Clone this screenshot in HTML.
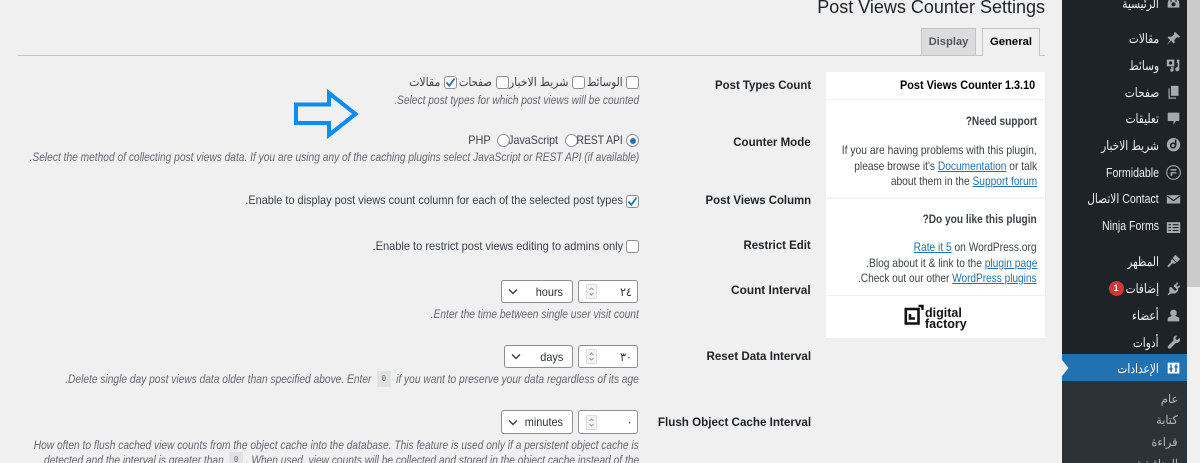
<!DOCTYPE html>
<html><head><meta charset="utf-8">
<style>
html{margin:0;padding:0;width:1200px;height:463px;overflow:hidden}
body{margin:0;padding:0;width:1200px;height:463px;overflow:hidden;position:relative;background:#f0f0f1;font-family:"Liberation Sans","Noto Sans CJK SC",sans-serif;font-size:12px;color:#3c434a}
.t{position:absolute;white-space:nowrap;line-height:16px;transform:scaleX(var(--s,.91));transform-origin:right center}
.r{text-align:right}
.b{font-weight:bold;color:#1d2327;--s:.95}
.d{color:#646970;font-style:italic;font-size:12px;--s:.85}
.p{--s:.85}
.h{--s:.88;font-weight:bold;font-size:11.500px;color:#3c434a}
a{color:#2271b1;text-decoration:underline}
.box{position:absolute;background:#fff;border:1px solid #8c8f94;border-radius:3px;box-sizing:border-box;width:13px;height:13px}
.box svg{position:absolute;left:-1px;top:-1px}
.rad{position:absolute;width:13px;height:13px;border:1px solid #8c8f94;border-radius:50%;background:#fff;box-sizing:border-box}
.ctl{position:absolute;background:#fff;border:1px solid #8c8f94;border-radius:3px;box-sizing:border-box;color:#2c3338}
.m{position:absolute;left:0;width:125px;height:26px}
.m .l{position:absolute;right:28px;top:4px;color:#f0f0f1;font-size:13px;line-height:18px;white-space:nowrap;transform:scaleX(.815);transform-origin:right center}
.m svg{position:absolute;right:6.500px;top:4px;width:15px;height:17px}
.code{display:inline-block;background:#e0e1e2;font-family:"Liberation Mono",monospace;font-size:9px;line-height:16px;height:16px;padding:0 5.500px;font-style:normal;margin:0 3px;vertical-align:top}
</style></head><body>

<div class="t" style="right:155px;top:-5px;font-size:18px;line-height:24px;color:#1d2327;--s:1;text-align:right">Post Views Counter Settings</div>

<div style="position:absolute;left:18px;top:55px;width:1027px;height:1px;background:#c3c4c7"></div>
<div style="position:absolute;left:921px;top:28px;width:55px;height:28px;background:#dcdcde;border:1px solid #c3c4c7;box-sizing:border-box;color:#50575e;font-weight:bold;font-size:11.200px;text-align:center;line-height:27px">Display</div>
<div style="position:absolute;left:982px;top:28px;width:58px;height:28px;background:#f0f0f1;border:1px solid #c3c4c7;border-bottom:none;box-sizing:border-box;color:#000;font-weight:bold;font-size:11.300px;text-align:center;line-height:27px">General</div>

<!-- right info card -->
<div style="position:absolute;left:826px;top:72px;width:219px;height:266px;background:#fff"></div>
<div style="position:absolute;left:826px;top:99px;width:219px;height:1px;background:#f0f0f1"></div>
<div style="position:absolute;left:826px;top:197px;width:219px;height:2px;background:#f4f4f5"></div>
<div style="position:absolute;left:826px;top:295px;width:219px;height:1px;background:#f0f0f1"></div>
<div class="t b r" style="right:165px;top:77px;color:#000;--s:.906">Post Views Counter 1.3.10</div>
<div class="t h r" style="right:163px;top:114px">?Need support</div>
<div class="t p r" style="right:163px;top:142px;--s:.86">If you are having problems with this plugin,</div>
<div class="t p r" style="right:163px;top:158px">please browse it's <a>Documentation</a> or talk</div>
<div class="t p r" style="right:163px;top:173px">about them in the <a>Support forum</a></div>
<div class="t h r" style="right:163px;top:212px">?Do you like this plugin</div>
<div class="t p r" style="right:163px;top:239px"><a>Rate it 5</a> on WordPress.org</div>
<div class="t p r" style="right:163px;top:255px">.Blog about it &amp; link to the <a>plugin page</a></div>
<div class="t p r" style="right:163px;top:270px;--s:.84">.Check out our other <a>WordPress plugins</a></div>
<svg style="position:absolute;left:904px;top:304px" width="20" height="22" viewBox="0 0 20 22"><path d="M1.800 5H14.500V19.500H1.800Z M6 10V14.500H11" fill="none" stroke="#111" stroke-width="2.600"/><path d="M14.500 2H18.500V6" fill="none" stroke="#111" stroke-width="2.400"/></svg>
<div class="t" style="left:925px;top:308px;font-size:12.500px;line-height:11px;font-weight:bold;color:#111;transform:none">digital<br>factory</div>

<!-- labels -->
<div class="t b r" style="right:389px;top:77px">Post Types Count</div>
<div class="t b r" style="right:389px;top:134px;--s:.96">Counter Mode</div>
<div class="t b r" style="right:389px;top:192px">Post Views Column</div>
<div class="t b r" style="right:389px;top:237px">Restrict Edit</div>
<div class="t b r" style="right:389px;top:282px;--s:.987">Count Interval</div>
<div class="t b r" style="right:389px;top:348px;--s:.968">Reset Data Interval</div>
<div class="t b r" style="right:389px;top:414px;--s:.969">Flush Object Cache Interval</div>

<!-- Post types -->
<div class="box" style="left:626px;top:76px"></div>
<div class="t r" style="right:577px;top:74px;--s:.86">الوسائط</div>
<div class="box" style="left:572px;top:76px"></div>
<div class="t r" style="right:632px;top:74px">شريط الاخبار</div>
<div class="box" style="left:496px;top:76px"></div>
<div class="t r" style="right:708px;top:74px;--s:.85">صفحات</div>
<div class="box" style="left:444px;top:76px"><svg width="13" height="13" viewBox="0 0 13 13"><path d="M2.500 6.500L5.300 9.800L10.500 2.500" fill="none" stroke="#2271b1" stroke-width="1.800"/></svg></div>
<div class="t r" style="right:760px;top:74px">مقالات</div>
<div class="t d r" style="right:561px;top:92px">.Select post types for which post views will be counted</div>

<!-- Arrow -->
<svg style="position:absolute;left:292px;top:88px" width="70" height="54" viewBox="0 0 70 54"><path d="M4 16.500H37V5L63.500 26L37 47V35H4Z" fill="none" stroke="#0a8cf5" stroke-width="4"/></svg>

<!-- Counter mode -->
<div class="rad" style="left:626px;top:134px"><div style="position:absolute;left:2.500px;top:2.500px;width:6px;height:6px;border-radius:50%;background:#2271b1"></div></div>
<div class="rad" style="left:565px;top:134px"></div>
<div class="rad" style="left:497px;top:134px"></div>
<div class="t r" style="right:577px;top:132px;--s:.86">REST API</div>
<div class="t r" style="right:642px;top:132px;--s:.89">JavaScript</div>
<div class="t r" style="right:709px;top:132px">PHP</div>
<div class="t d r" style="right:561px;top:149px">.Select the method of collecting post views data. If you are using any of the caching plugins select JavaScript or REST API (if available)</div>

<!-- column -->
<div class="box" style="left:626px;top:195px"><svg width="13" height="13" viewBox="0 0 13 13"><path d="M2.500 6.500L5.300 9.800L10.500 2.500" fill="none" stroke="#2271b1" stroke-width="1.800"/></svg></div>
<div class="t r" style="right:577px;top:192px">.Enable to display post views count column for each of the selected post types</div>
<div class="box" style="left:626px;top:240px"></div>
<div class="t r" style="right:577px;top:238px;--s:.921">.Enable to restrict post views editing to admins only</div>

<!-- Count interval -->
<div class="ctl" style="left:578px;top:280px;width:60px;height:23px"><div class="t" style="right:5px;top:3px">٢٤</div><svg style="position:absolute;left:7px;top:3px" width="11" height="15" viewBox="0 0 11 15"><rect x=".500" y=".500" width="10" height="14" rx="1" fill="#f4f4f4" stroke="#ddd"/><path d="M3.500 6L5.500 4L7.500 6M3.500 9L5.500 11L7.500 9" fill="none" stroke="#999"/></svg></div>
<div class="ctl" style="left:501px;top:280px;width:72px;height:23px"><div class="t" style="right:9px;top:3px">hours</div><svg style="position:absolute;left:6px;top:7px" width="10" height="7" viewBox="0 0 10 7"><path d="M1 1.500L5 5.500L9 1.500" fill="none" stroke="#2c3338" stroke-width="1.300"/></svg></div>
<div class="t d r" style="right:561px;top:306px">.Enter the time between single user visit count</div>

<!-- Reset -->
<div class="ctl" style="left:578px;top:345px;width:60px;height:23px"><div class="t" style="right:5px;top:3px">٣٠</div><svg style="position:absolute;left:7px;top:3px" width="11" height="15" viewBox="0 0 11 15"><rect x=".500" y=".500" width="10" height="14" rx="1" fill="#f4f4f4" stroke="#ddd"/><path d="M3.500 6L5.500 4L7.500 6M3.500 9L5.500 11L7.500 9" fill="none" stroke="#999"/></svg></div>
<div class="ctl" style="left:504px;top:345px;width:69px;height:23px"><div class="t" style="right:9px;top:3px">days</div><svg style="position:absolute;left:6px;top:7px" width="10" height="7" viewBox="0 0 10 7"><path d="M1 1.500L5 5.500L9 1.500" fill="none" stroke="#2c3338" stroke-width="1.300"/></svg></div>
<div class="t d r" style="right:561px;top:371px">.Delete single day post views data older than specified above. Enter <span class="code">0</span> if you want to preserve your data regardless of its age</div>

<!-- Flush -->
<div class="ctl" style="left:578px;top:410px;width:60px;height:24px"><div class="t" style="right:5px;top:3px">٠</div><svg style="position:absolute;left:7px;top:4px" width="11" height="15" viewBox="0 0 11 15"><rect x=".500" y=".500" width="10" height="14" rx="1" fill="#f4f4f4" stroke="#ddd"/><path d="M3.500 6L5.500 4L7.500 6M3.500 9L5.500 11L7.500 9" fill="none" stroke="#999"/></svg></div>
<div class="ctl" style="left:501px;top:410px;width:72px;height:24px"><div class="t" style="right:9px;top:3px">minutes</div><svg style="position:absolute;left:6px;top:8px" width="10" height="7" viewBox="0 0 10 7"><path d="M1 1.500L5 5.500L9 1.500" fill="none" stroke="#2c3338" stroke-width="1.300"/></svg></div>
<div class="t d r" style="right:561px;top:437px">How often to flush cached view counts from the object cache into the database. This feature is used only if a persistent object cache is</div>
<div class="t d r" style="right:561px;top:452px">detected and the interval is greater than <span class="code">0</span>. When used, view counts will be collected and stored in the object cache instead of the</div>

<!-- Scrollbar -->
<div style="position:absolute;left:1187px;top:0;width:13px;height:287px;background:#cbcbcb"></div>

<!-- Admin menu -->
<div style="position:absolute;left:1062px;top:0;width:125px;height:463px;background:#1d2327;overflow:hidden">
  <div class="m" style="top:-9px"><div class="l">الرئيسية</div><svg viewBox="0 0 18 20"><path d="M2 15V10A7 7 0 0 1 16 10V15Z" fill="#a7aaad"/><circle cx="9" cy="11" r="2.500" fill="#1d2327"/><circle cx="6" cy="7" r="1" fill="#1d2327"/><circle cx="12" cy="7" r="1" fill="#1d2327"/></svg></div>
  <div class="m" style="top:26px"><div class="l">مقالات</div><svg viewBox="0 0 18 20"><path d="M11 2L17 8L15 9L13 8.500L10 12L10.500 15L9 16L6 12.500L2 17L1.500 17L5 12L2 9L3 7.500L6 8L10 5L9.500 3.500Z" fill="#a7aaad"/></svg></div>
  <div class="m" style="top:53px"><div class="l">وسائط</div><svg viewBox="0 0 18 20"><path d="M1 3H10V11H1Z M13 3H16V14A2.500 2.500 0 1 1 14 12V7H13Z M6 12H9V15A2 2 0 1 1 7 13.500V13H6Z" fill="#a7aaad"/><circle cx="5.500" cy="7" r="2" fill="#1d2327"/></svg></div>
  <div class="m" style="top:80px"><div class="l">صفحات</div><svg viewBox="0 0 18 20"><path d="M6 2H15V14H6Z" fill="#a7aaad"/><path d="M3 5H4.500V16H12V17.500H3Z" fill="#a7aaad"/></svg></div>
  <div class="m" style="top:106px"><div class="l">تعليقات</div><svg viewBox="0 0 18 20"><path d="M3 3H15Q16 3 16 4V12Q16 13 15 13H12L9 17V13H3Q2 13 2 12V4Q2 3 3 3Z" fill="#a7aaad"/></svg></div>
  <div class="m" style="top:133px"><div class="l">شريط الاخبار</div><svg viewBox="0 0 18 20"><circle cx="9" cy="9" r="8" fill="#a7aaad"/><circle cx="8.500" cy="10" r="2.800" fill="none" stroke="#1d2327" stroke-width="2"/><path d="M11.500 3V10" stroke="#1d2327" stroke-width="2"/></svg></div>
  <div class="m" style="top:160px"><div class="l">Formidable</div><svg viewBox="0 0 18 20"><circle cx="9" cy="10" r="8.200" fill="none" stroke="#a7aaad" stroke-width="1.300"/><path d="M5.500 6H12.500V7.800H5.500Z M5.500 9.500H12.500V11.200H7.500V14H5.500Z" fill="#a7aaad"/></svg></div>
  <div class="m" style="top:186px"><div class="l">الاتصال Contact</div><svg viewBox="0 0 18 20"><rect x="1" y="6" width="16" height="10" fill="#a7aaad"/><path d="M1.500 7L9 12.500L16.500 7" fill="none" stroke="#1d2327" stroke-width="1.500"/></svg></div>
  <div class="m" style="top:213px"><div class="l">Ninja Forms</div><svg viewBox="0 0 18 20"><rect x="1" y="6" width="16" height="13" fill="#a7aaad"/><path d="M3 9H6M8 9H15M3 12.500H6M8 12.500H15M3 16H6M8 16H15" stroke="#1d2327" stroke-width="1.300"/></svg></div>
  <div class="m" style="top:249px"><div class="l">المظهر</div><svg viewBox="0 0 18 20"><path d="M11 2L17 7L13 11L8 6Z M7.500 7L12 11.500L10 13L8 12L3 17L1.500 15.500L6 10.500L5.500 9Z" fill="#a7aaad"/></svg></div>
  <div class="m" style="top:276px"><div class="l">إضافات</div><svg viewBox="0 0 18 20"><path d="M13 2L15 4L12.500 6.500L14 8L16 6L17 7.500L14.500 10V13L11 16H6L3 18L2 17L4 14.500V9L6 8L11 13L13 11L9 7L11 4.500L12 5.500Z" fill="#a7aaad"/></svg><div style="position:absolute;right:63.500px;top:5px;width:15px;height:15px;border-radius:50%;background:#d63638;color:#fff;font-size:9px;font-weight:bold;text-align:center;line-height:15px">1</div></div>
  <div class="m" style="top:303px"><div class="l">أعضاء</div><svg viewBox="0 0 18 20"><circle cx="9" cy="7" r="4" fill="#a7aaad"/><path d="M2 17V14Q2 12 5 11.500L7 10.500H11L13 11.500Q16 12 16 14V17Z" fill="#a7aaad"/></svg></div>
  <div class="m" style="top:330px"><div class="l">أدوات</div><svg viewBox="0 0 18 20"><path d="M16 4.500L13.500 7L11.500 6L11.500 4L14 2Q10.500 1 9 4Q8.500 6 9 7.500L2.500 14Q1.500 15.500 3 17Q4.500 18 6 16.500L12 10.500Q15 11 16.500 8.500Q17.500 6.500 16 4.500Z" fill="#a7aaad"/></svg></div>
  <div style="position:absolute;left:0;top:354px;width:125px;height:27px;background:#2271b1"></div>
  <svg style="position:absolute;left:0;top:360px" width="7" height="16" viewBox="0 0 7 16"><path d="M0 0L6.500 8L0 16Z" fill="#f0f0f1"/></svg>
  <div class="m" style="top:356px"><div class="l" style="color:#fff">الإعدادات</div><svg viewBox="0 0 18 20"><rect x="2" y="3" width="14" height="13" fill="#fff"/><path d="M6 5V14M4 10.500H8M12 5V14M10 8H14" stroke="#2271b1" stroke-width="1.800"/></svg></div>
  <div style="position:absolute;left:0;top:381px;width:125px;height:82px;background:#2c3338"></div>
  <div class="t" style="right:9px;top:391px;color:#b4b7ba;--s:.95">عام</div>
  <div class="t" style="right:9px;top:412px;color:#b4b7ba;--s:.95">كتابة</div>
  <div class="t" style="right:9px;top:434px;color:#b4b7ba;--s:.95">قراءة</div>
  <div class="t" style="right:9px;top:456px;color:#b4b7ba;--s:.95">المناقشة</div>
</div>

</body></html>
